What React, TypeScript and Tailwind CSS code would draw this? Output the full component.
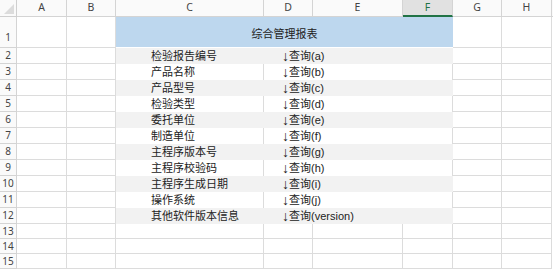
import React from 'react';

const cols = ['A', 'B', 'C', 'D', 'E', 'F', 'G', 'H'];

const items: [string, string][] = [
  ['检验报告编号', 'a'],
  ['产品名称', 'b'],
  ['产品型号', 'c'],
  ['检验类型', 'd'],
  ['委托单位', 'e'],
  ['制造单位', 'f'],
  ['主程序版本号', 'g'],
  ['主程序校验码', 'h'],
  ['主程序生成日期', 'i'],
  ['操作系统', 'j'],
  ['其他软件版本信息', 'version'],
];

const grid = 'border-r border-b border-[#dcdcdc]';
const font = { fontFamily: '"Liberation Sans", "Noto Sans CJK SC", sans-serif' };

function RowNum({ n, bottom }: { n: number; bottom?: boolean }) {
  return (
    <div
      className={`flex justify-center border-r border-b border-[#d4d4d4] bg-[#fafafa] text-[10px] text-[#444] ${
        bottom ? 'items-end pb-[2px]' : 'items-center'
      }`}
      style={{ fontFamily: '"Noto Sans", sans-serif' }}
    >
      {n}
    </div>
  );
}

function Blank() {
  return <div className={grid} />;
}

function Query({ k }: { k: string }) {
  return (
    <span className="flex items-center">
      <span className="text-[14px] leading-none font-bold">↓</span>
      <span>查询({k})</span>
    </span>
  );
}

export default function App() {
  return (
    <div
      className="grid h-[269px] w-[553px] overflow-hidden bg-white text-[11px] text-[#222]"
      style={{
        ...font,
        gridTemplateColumns: '17px 50px 49px 148px 49px 90px 50px 49px 50px 1fr',
        gridTemplateRows: '17px 31px repeat(11, 16px) repeat(3, 15px)',
      }}
    >
      {/* header row */}
      <div className="relative border-r border-b border-[#cfcfcf] bg-[#fafafa]">
        <svg className="absolute bottom-[2px] right-[2px]" width="10" height="10" viewBox="0 0 10 10">
          <polygon points="10,0 10,10 0,10" fill="#dcdcdc" />
        </svg>
      </div>
      {cols.map((c) =>
        c === 'F' ? (
          <div
            key={c}
            className="flex items-center justify-center border-r border-[#d4d4d4] border-b-2 border-b-[#217346] bg-[#e1e1e1] text-[10.5px] text-[#217346]"
            style={{ fontFamily: '"Noto Sans", sans-serif' }}
          >
            {c}
          </div>
        ) : (
          <div
            key={c}
            className="flex items-center justify-center border-r border-b border-[#d4d4d4] bg-[#fafafa] text-[10.5px] text-[#444]"
            style={{ fontFamily: '"Noto Sans", sans-serif' }}
          >
            {c}
          </div>
        ),
      )}
      <div className="border-b border-[#d4d4d4] bg-[#fafafa]" />

      {/* row 1: title */}
      <RowNum n={1} bottom />
      <Blank />
      <Blank />
      <div className="col-span-4 flex items-center justify-center border-b border-white bg-[#bdd7ee] pt-[4px]">
        综合管理报表
      </div>
      <Blank />
      <Blank />
      <div />

      {/* rows 2-12 */}
      {items.map(([label, key], i) => {
        const shaded = i % 2 === 0;
        return (
          <React.Fragment key={key}>
            <RowNum n={i + 2} />
            <Blank />
            <Blank />
            {shaded ? (
              <div className="col-span-4 flex items-center bg-[#f2f2f2]">
                <span className="w-[148px] pl-[35px]">{label}</span>
                <span className="pl-[18px]">
                  <Query k={key} />
                </span>
              </div>
            ) : (
              <>
                <div className="flex items-center border-r border-[#dcdcdc] pl-[35px]">{label}</div>
                <div className="col-span-3 flex items-center border-r border-[#dcdcdc] pl-[18px]">
                  <Query k={key} />
                </div>
              </>
            )}
            <Blank />
            <Blank />
            <div />
          </React.Fragment>
        );
      })}

      {/* rows 13-15 */}
      {[13, 14, 15].map((n) => (
        <React.Fragment key={n}>
          <RowNum n={n} />
          {cols.map((c) => (
            <Blank key={c} />
          ))}
          <div />
        </React.Fragment>
      ))}
    </div>
  );
}
